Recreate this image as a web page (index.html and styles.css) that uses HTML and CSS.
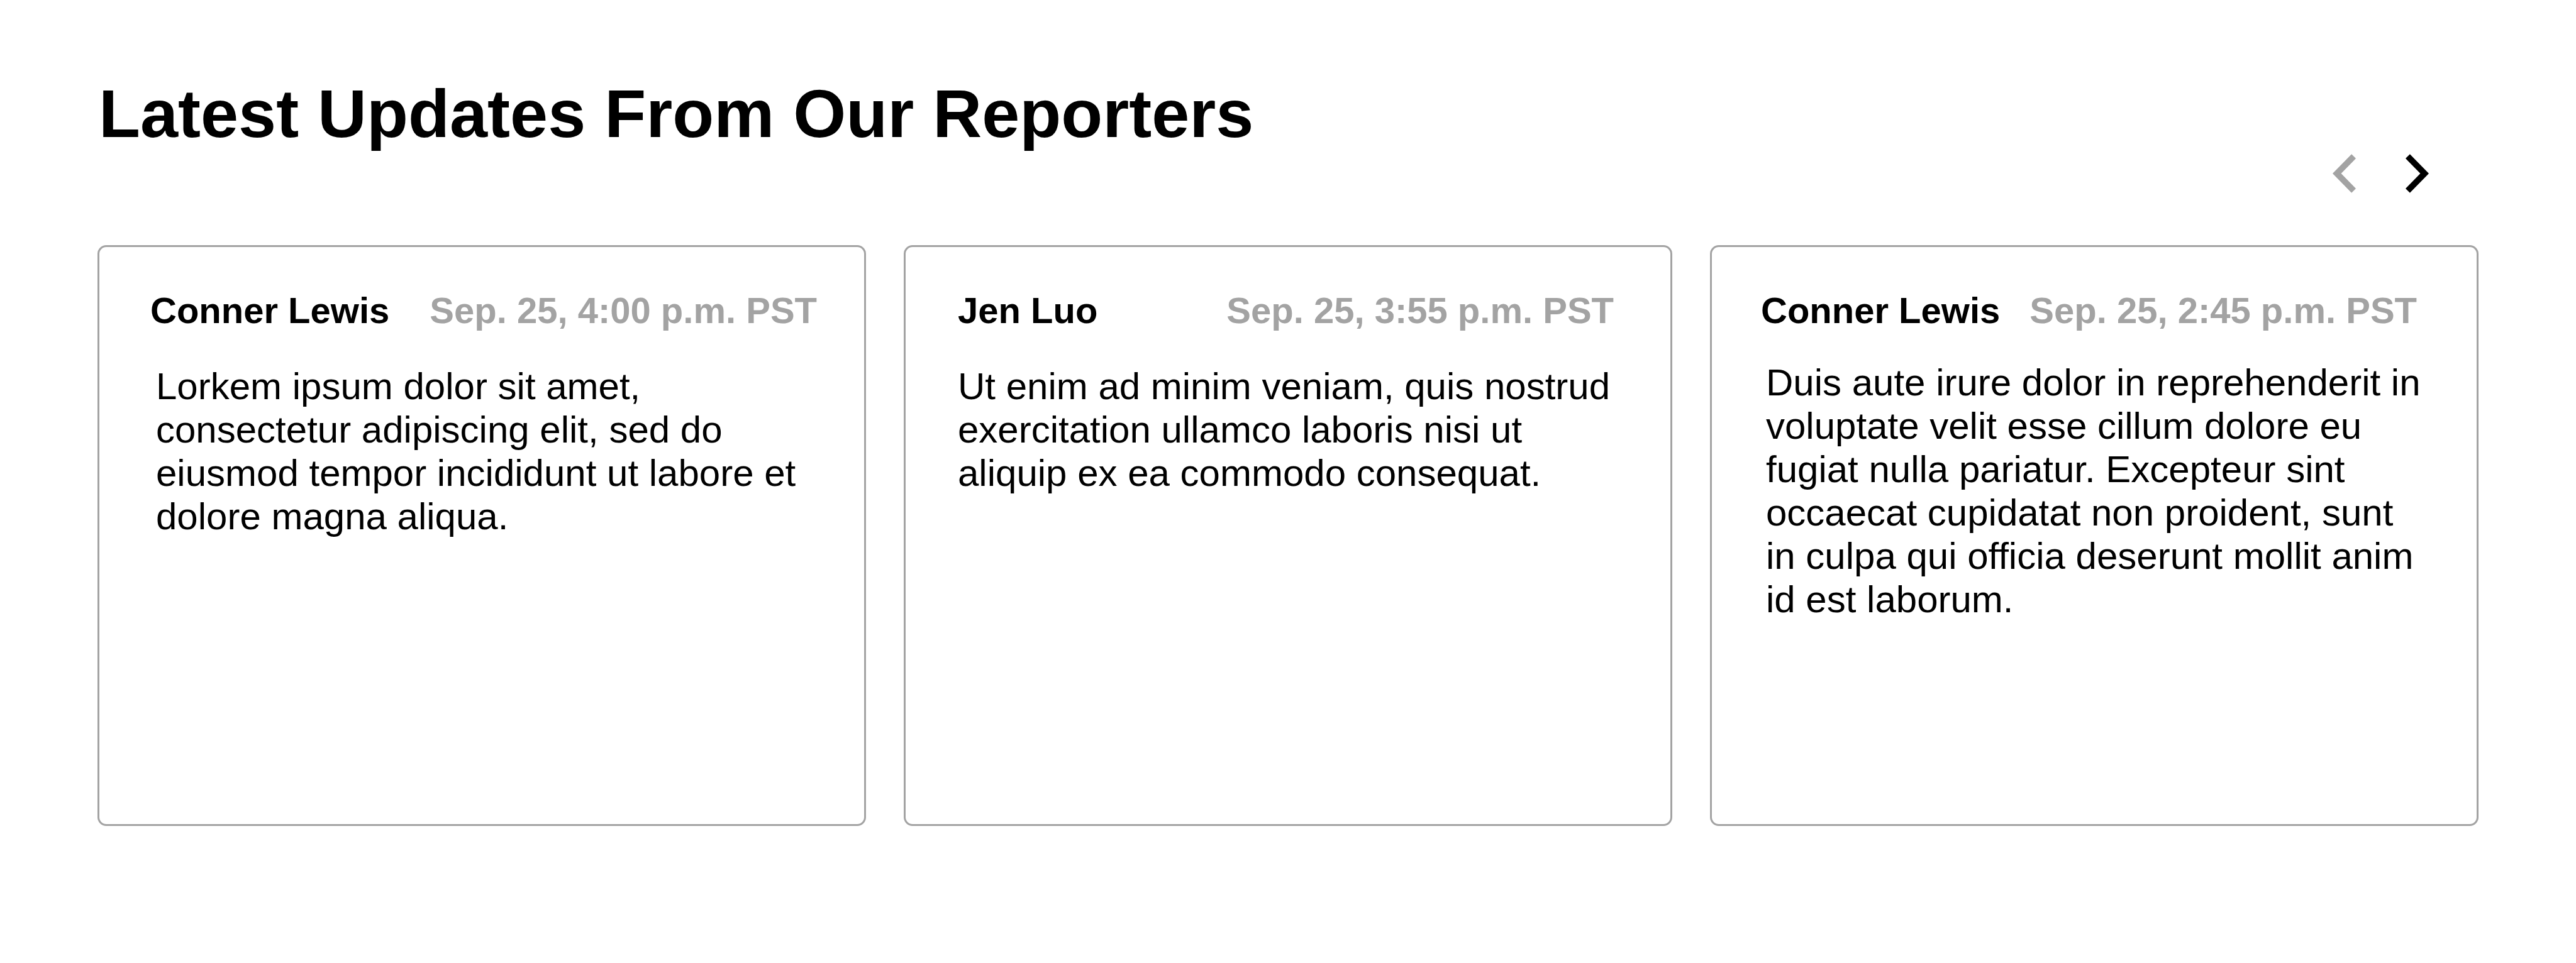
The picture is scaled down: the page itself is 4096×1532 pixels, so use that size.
FILE: index.html
```html
<!DOCTYPE html>
<html lang="en">
<head>
<meta charset="utf-8">
<title>Latest Updates From Our Reporters</title>
<link rel="stylesheet" href="styles.css">
</head>
<body>
<main class="updates">
  <h1 class="updates-title">Latest Updates From Our Reporters</h1>
  <nav class="pager" aria-label="Updates">
    <button class="pager-button" type="button" aria-label="Previous" disabled>
      <svg class="pager-icon" viewBox="0 0 161 267" aria-hidden="true"><path d="M131 0 161 29.500 59 133.500 161 237.500 131 267 0 133.500Z"/></svg>
    </button>
    <button class="pager-button" type="button" aria-label="Next">
      <svg class="pager-icon" viewBox="0 0 161 267" aria-hidden="true"><path d="M30 0 0 29.500 102 133.500 0 237.500 30 267 161 133.500Z"/></svg>
    </button>
  </nav>
  <section class="cards">
    <article class="card card-first">
      <header class="card-head">
        <h2 class="card-author">Conner Lewis</h2>
        <time class="card-time">Sep. 25, 4:00 p.m. PST</time>
      </header>
      <p class="card-text">Lorkem ipsum dolor sit amet, consectetur adipiscing elit, sed do eiusmod tempor incididunt ut labore et dolore magna aliqua.</p>
    </article>
    <article class="card card-middle">
      <header class="card-head">
        <h2 class="card-author">Jen Luo</h2>
        <time class="card-time">Sep. 25, 3:55 p.m. PST</time>
      </header>
      <p class="card-text">Ut enim ad minim veniam, quis nostrud exercitation ullamco laboris nisi ut aliquip ex ea commodo consequat.</p>
    </article>
    <article class="card card-last">
      <header class="card-head">
        <h2 class="card-author">Conner Lewis</h2>
        <time class="card-time">Sep. 25, 2:45 p.m. PST</time>
      </header>
      <p class="card-text">Duis aute irure dolor in reprehenderit in voluptate velit esse cillum dolore eu fugiat nulla pariatur. Excepteur sint occaecat cupidatat non proident, sunt in culpa qui officia deserunt mollit anim id est laborum.</p>
    </article>
  </section>
</main>
</body>
</html>
```
FILE: styles.css
```css
* {
  box-sizing: border-box;
}

body {
  margin: 0;
  background: #fff;
  color: #000;
  font-family: "Liberation Sans", Arial, sans-serif;
}

.updates {
  padding: 119px 155px 200px;
}

.updates-title {
  margin: 0;
  padding-left: 2px;
  font-size: 108px;
  line-height: 124px;
  font-weight: 700;
}

.pager {
  display: flex;
  justify-content: flex-end;
  gap: 39px;
  margin-top: 2px;
  padding-right: 59px;
}

.pager-button {
  display: block;
  padding: 0 20px;
  border: 0;
  background: none;
  color: #000;
  cursor: pointer;
}

.pager-button:disabled {
  color: #a3a3a3;
  cursor: default;
}

.pager-icon {
  display: block;
  width: 37px;
  height: 62px;
  fill: currentColor;
}

.cards {
  display: grid;
  grid-template-columns: repeat(3, 1fr);
  gap: 60px;
  margin-top: 83px;
}

.card {
  display: flex;
  flex-direction: column;
  gap: 52px;
  min-height: 924px;
  padding: 67px 0;
  border: 3px solid #a3a3a3;
  border-radius: 14px;
}

.card-head {
  display: flex;
  justify-content: space-between;
  align-items: baseline;
}

.card-author,
.card-time {
  margin: 0;
  font-size: 58px;
  line-height: 68px;
  font-weight: 700;
  white-space: nowrap;
}

.card-time {
  color: #a3a3a3;
}

.card-text {
  margin: 0;
  font-size: 60px;
  line-height: 69px;
}

.card-first .card-head {
  padding: 0 75px 0 81px;
}

.card-first .card-text {
  padding: 0 75px 0 90px;
}

.card-middle .card-head {
  padding: 0 90px 0 83px;
}

.card-middle .card-text {
  padding: 0 75px 0 83px;
}

.card-last {
  gap: 46px;
}

.card-last .card-head {
  padding: 0 95px 0 78px;
}

.card-last .card-text {
  padding: 0 75px 0 86px;
}
```
